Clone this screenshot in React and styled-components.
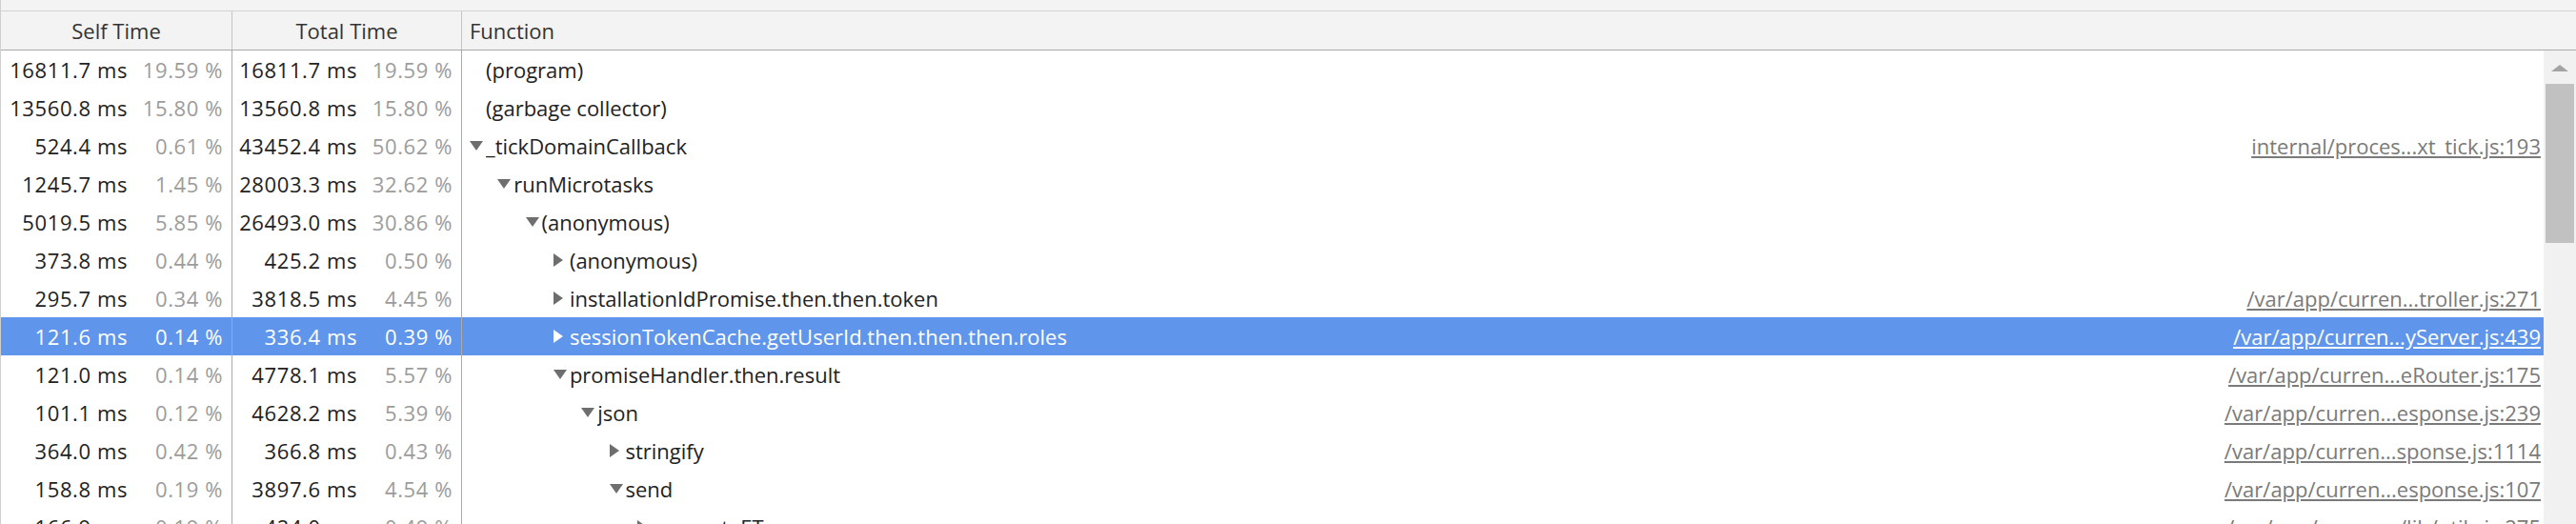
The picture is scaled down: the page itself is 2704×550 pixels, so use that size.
import React from 'react'
import styled, { createGlobalStyle } from 'styled-components'

const GlobalStyle = createGlobalStyle`
  html, body {
    margin: 0;
    padding: 0;
    background: #fff;
  }
  body {
    font-family: 'Open Sans', 'Noto Sans', sans-serif;
  }
`

const rows = [
  { self: '16811.7 ms', selfP: '19.59 %', total: '16811.7 ms', totalP: '19.59 %', depth: 0, name: '(program)' },
  { self: '13560.8 ms', selfP: '15.80 %', total: '13560.8 ms', totalP: '15.80 %', depth: 0, name: '(garbage collector)' },
  { self: '524.4 ms', selfP: '0.61 %', total: '43452.4 ms', totalP: '50.62 %', depth: 0, toggle: 'down', name: '_tickDomainCallback', url: 'internal/proces...xt_tick.js:193' },
  { self: '1245.7 ms', selfP: '1.45 %', total: '28003.3 ms', totalP: '32.62 %', depth: 1, toggle: 'down', name: 'runMicrotasks' },
  { self: '5019.5 ms', selfP: '5.85 %', total: '26493.0 ms', totalP: '30.86 %', depth: 2, toggle: 'down', name: '(anonymous)' },
  { self: '373.8 ms', selfP: '0.44 %', total: '425.2 ms', totalP: '0.50 %', depth: 3, toggle: 'right', name: '(anonymous)' },
  { self: '295.7 ms', selfP: '0.34 %', total: '3818.5 ms', totalP: '4.45 %', depth: 3, toggle: 'right', name: 'installationIdPromise.then.then.token', url: '/var/app/curren...troller.js:271' },
  { self: '121.6 ms', selfP: '0.14 %', total: '336.4 ms', totalP: '0.39 %', depth: 3, toggle: 'right', name: 'sessionTokenCache.getUserId.then.then.then.roles', url: '/var/app/curren...yServer.js:439', selected: true },
  { self: '121.0 ms', selfP: '0.14 %', total: '4778.1 ms', totalP: '5.57 %', depth: 3, toggle: 'down', name: 'promiseHandler.then.result', url: '/var/app/curren...eRouter.js:175' },
  { self: '101.1 ms', selfP: '0.12 %', total: '4628.2 ms', totalP: '5.39 %', depth: 4, toggle: 'down', name: 'json', url: '/var/app/curren...esponse.js:239' },
  { self: '364.0 ms', selfP: '0.42 %', total: '366.8 ms', totalP: '0.43 %', depth: 5, toggle: 'right', name: 'stringify', url: '/var/app/curren...sponse.js:1114' },
  { self: '158.8 ms', selfP: '0.19 %', total: '3897.6 ms', totalP: '4.54 %', depth: 5, toggle: 'down', name: 'send', url: '/var/app/curren...esponse.js:107' },
  { self: '166.9 ms', selfP: '0.19 %', total: '424.0 ms', totalP: '0.49 %', depth: 6, toggle: 'right', name: 'generateETag', url: '/var/app/curren.../lib/utils.js:275' },
]

const Triangle = ({ dir }) =>
  dir === 'down' ? (
    <svg width='14' height='10' viewBox='0 0 14 10'>
      <polygon points='0,0 14,0 7,10' fill='currentColor' />
    </svg>
  ) : (
    <svg width='10' height='14' viewBox='0 0 10 14'>
      <polygon points='0,0 10,7 0,14' fill='currentColor' />
    </svg>
  )

const Profile = () => {
  return (
    <Wrapper>
      <TopStrip />
      <HeaderRow>
        <HeaderCell $center>Self Time</HeaderCell>
        <HeaderCell $center>Total Time</HeaderCell>
        <HeaderCell>Function</HeaderCell>
      </HeaderRow>
      <Body>
        <Rows>
          {rows.map((r, i) => (
            <Row key={i} $selected={r.selected}>
              <TimeCell>
                <span>{r.self}</span>
                <Percent>{r.selfP}</Percent>
              </TimeCell>
              <TimeCell>
                <span>{r.total}</span>
                <Percent>{r.totalP}</Percent>
              </TimeCell>
              <FunctionCell $depth={r.depth}>
                <Toggle>{r.toggle && <Triangle dir={r.toggle} />}</Toggle>
                <Name>{r.name}</Name>
                {r.url && <SourceLink>{r.url}</SourceLink>}
              </FunctionCell>
            </Row>
          ))}
        </Rows>
        <Scrollbar>
          <ScrollArrow />
          <ScrollThumb />
        </Scrollbar>
      </Body>
    </Wrapper>
  )
}

const Wrapper = styled.div`
  width: 2704px;
  height: 550px;
  overflow: hidden;
  display: flex;
  flex-direction: column;
  font-family: 'Open Sans', 'Noto Sans', sans-serif;
  font-size: 22px;
  color: #222;
  border-left: 1px solid #cfcfcf;
  box-sizing: border-box;
`

const TopStrip = styled.div`
  height: 11px;
  flex-shrink: 0;
  background: #f3f3f3;
  border-bottom: 1px solid #d2d2d2;
`

const columns = '243px 241px 1fr'

const HeaderRow = styled.div`
  display: grid;
  grid-template-columns: ${columns};
  height: 40px;
  flex-shrink: 0;
  background: #f3f3f3;
  border-bottom: 1px solid #a9a9a9;
`

const HeaderCell = styled.div`
  display: flex;
  align-items: center;
  justify-content: ${(p) => (p.$center ? 'center' : 'flex-start')};
  padding: 0 8px;
  color: #333;
  border-right: 1px solid #c4c4c4;
  &:last-child {
    border-right: none;
  }
`

const Body = styled.div`
  flex: 1;
  display: flex;
  min-height: 0;
`

const Rows = styled.div`
  flex: 1;
  display: flex;
  flex-direction: column;
`

const Row = styled.div`
  display: grid;
  grid-template-columns: ${columns};
  height: 40px;
  flex-shrink: 0;
  background: ${(p) => (p.$selected ? '#5f96ec' : '#fff')};
  color: ${(p) => (p.$selected ? '#fff' : '#222')};
  --muted: ${(p) => (p.$selected ? '#fff' : '#9c9c9c')};
  --link: ${(p) => (p.$selected ? '#fff' : '#7a7a7a')};
  --arrow: ${(p) => (p.$selected ? '#fff' : '#6e6e6e')};
`

const TimeCell = styled.div`
  display: flex;
  align-items: center;
  justify-content: flex-end;
  padding-right: 9px;
  border-right: 1px solid #ababab;
  white-space: nowrap;
  letter-spacing: 0.6px;
`

const Percent = styled.span`
  width: 100px;
  text-align: right;
  color: var(--muted);
`

const FunctionCell = styled.div`
  display: flex;
  align-items: center;
  min-width: 0;
  padding-left: ${(p) => 8 + p.$depth * 29.3}px;
  white-space: nowrap;
`

const Toggle = styled.span`
  width: 17px;
  flex-shrink: 0;
  display: flex;
  align-items: center;
  color: var(--arrow);
`

const Name = styled.span`
  overflow: hidden;
`

const SourceLink = styled.span`
  margin-left: auto;
  padding-right: 3px;
  color: var(--link);
  text-decoration: underline;
`

const Scrollbar = styled.div`
  width: 34px;
  flex-shrink: 0;
  background: #f1f1f1;
  display: flex;
  flex-direction: column;
  align-items: center;
`

const ScrollArrow = styled.div`
  margin-top: 15px;
  width: 0;
  height: 0;
  border-left: 9px solid transparent;
  border-right: 9px solid transparent;
  border-bottom: 7px solid #a3a3a3;
`

const ScrollThumb = styled.div`
  margin-top: 13px;
  width: 30px;
  height: 167px;
  background: #c1c1c1;
`

const App = () => (
  <>
    <GlobalStyle />
    <Profile />
  </>
)

export default App
